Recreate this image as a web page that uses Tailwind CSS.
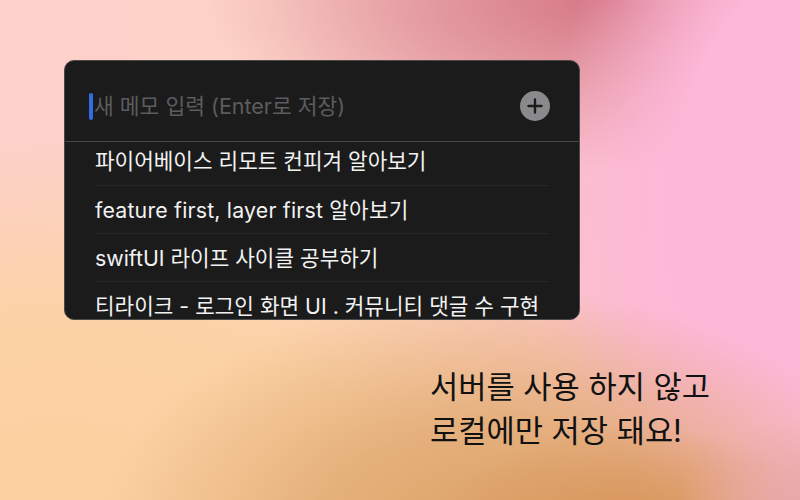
<!DOCTYPE html>
<html lang="ko">
  <head>
    <meta charset="UTF-8" />
    <title>메모</title>
    <script src="https://cdn.jsdelivr.net/npm/@tailwindcss/browser@4"></script>
  </head>
  <body class="w-[800px] h-[500px] overflow-hidden font-['Inter','Noto_Sans_CJK_KR',sans-serif] bg-[radial-gradient(ellipse_120px_80px_at_800px_500px,#e8a8a8_0%,#e8a8a800_100%),radial-gradient(ellipse_190px_90px_at_630px_515px,#d8965c_0%,#d8965c00_100%),radial-gradient(ellipse_400px_240px_at_500px_530px,#dca268_0%,#dfa870cc_45%,#e0aa7400_100%),radial-gradient(ellipse_260px_420px_at_810px_190px,#fdb8d8_0%,#fdb8d8_50%,#fdb8d800_100%),radial-gradient(ellipse_400px_170px_at_605px_0px,#d57886_0%,#de8f98cc_45%,#e8a0a000_100%),radial-gradient(ellipse_640px_360px_at_60px_500px,#fcd0a0_0%,#fcd3a6_50%,#fcd3a600_100%),linear-gradient(90deg,#fdd0ca_0%,#fdd3c8_35%,#f9c4c4_65%,#fdb8d8_90%)]">
    <div class="pt-[60px] pl-[64px]">
      <div class="w-[516px] h-[260px] overflow-hidden rounded-[10px] border border-[#4a4a4a] bg-[#1b1b1c]">
        <div class="h-[81px] pt-[10px] flex items-center pl-[24px] pr-[29px] border-b border-[#47474a]">
          <span class="w-[4px] h-[27px] rounded-full bg-[#2f6de0]"></span>
          <span class="ml-[1px] flex-1 text-[21.5px] text-[#5c5c5e]">새 메모 입력 (Enter로 저장)</span>
          <svg width="30" height="30" viewBox="0 0 30 30">
            <circle cx="15" cy="15" r="15" fill="#8a8a8c" />
            <path d="M15 8.5v13M8.5 15h13" stroke="#1b1b1c" stroke-width="2.4" stroke-linecap="round" />
          </svg>
        </div>
        <ul class="px-[30px] text-[21.3px] text-[#f2f2f2]">
          <li class="h-[44px] pb-[3px] flex items-center border-b border-[#262627]">파이어베이스 리모트 컨피겨 알아보기</li>
          <li class="h-[48px] pt-[2px] flex items-center border-b border-[#262627] tracking-[0.2px]">feature first, layer first 알아보기</li>
          <li class="h-[48px] pt-[2px] flex items-center border-b border-[#262627]">swiftUI 라이프 사이클 공부하기</li>
          <li class="h-[48px] pt-[2px] flex items-center">티라이크 - 로그인 화면 UI . 커뮤니티 댓글 수 구현</li>
        </ul>
      </div>
      <p class="mt-[45px] ml-[366px] text-[30.7px] leading-[44px] text-[#111111]">서버를 사용 하지 않고<br />로컬에만 저장 돼요!</p>
    </div>
  </body>
</html>
